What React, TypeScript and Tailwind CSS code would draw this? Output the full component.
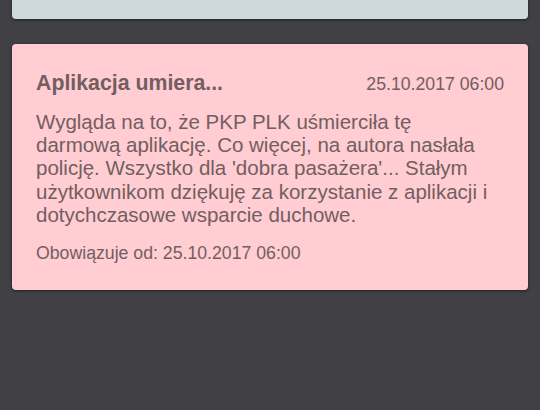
export default function App() {
  return (
    <div
      className="w-[540px] h-[410px] overflow-hidden bg-[#414045] px-3"
      style={{ fontFamily: '"Liberation Sans", Arial, sans-serif' }}
    >
      <div className="-mt-10 h-[59px] rounded bg-[#cfd8dc] shadow-[0_1px_3px_rgba(0,0,0,0.5)]" />
      <div className="mt-[25px] rounded bg-[#ffcdd2] px-6 pt-[25px] pb-6 text-[#735e61] shadow-[0_1px_3px_rgba(0,0,0,0.5)]">
        <div className="flex items-baseline justify-between">
          <h3 className="text-[21.3px] font-bold leading-7">Aplikacja umiera...</h3>
          <span className="text-[17.7px]">25.10.2017 06:00</span>
        </div>
        <p className="mt-3 pr-2 text-[20.5px] leading-[23.4px]">
          Wygląda na to, że PKP PLK uśmierciła tę darmową aplikację. Co więcej, na autora nasłała policję. Wszystko dla 'dobra pasażera'... Stałym użytkownikom dziękuję za korzystanie z aplikacji i dotychczasowe wsparcie duchowe.
        </p>
        <p className="mt-[13px] text-[17.7px]">Obowiązuje od: 25.10.2017 06:00</p>
      </div>
    </div>
  );
}
